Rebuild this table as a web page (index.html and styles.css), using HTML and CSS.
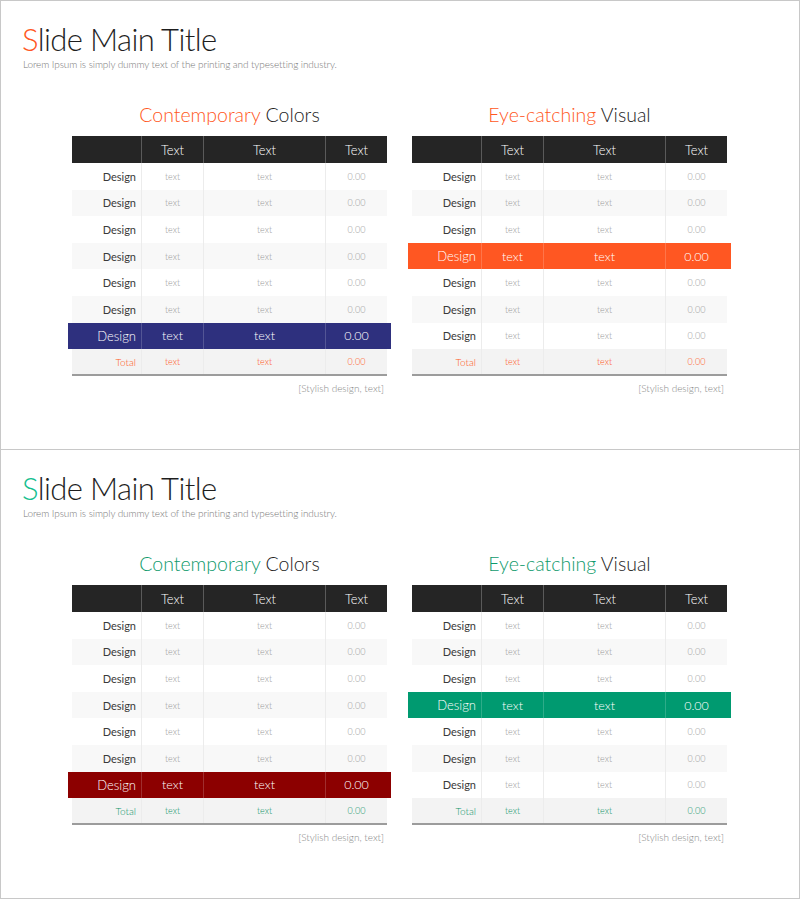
FILE: index.html
```html
<!DOCTYPE html>
<html>
<head>
<meta charset="utf-8">
<link rel="stylesheet" href="styles.css">
</head>
<body>
<div class="page">
  <section class="slide slide-a">
    <h1 class="title"><span class="accent">S</span>lide Main Title</h1>
    <p class="subtitle">Lorem Ipsum is simply dummy text of the printing and typesetting industry.</p>
    <div class="tables">
      <div class="block">
        <h2 class="heading"><span class="accent-h">Contemporary</span> Colors</h2>
        <div class="table">
          <div class="row head"><div></div><div>Text</div><div>Text</div><div>Text</div></div>
          <div class="row"><div>Design</div><div>text</div><div>text</div><div>0.00</div></div>
          <div class="row alt"><div>Design</div><div>text</div><div>text</div><div>0.00</div></div>
          <div class="row"><div>Design</div><div>text</div><div>text</div><div>0.00</div></div>
          <div class="row alt"><div>Design</div><div>text</div><div>text</div><div>0.00</div></div>
          <div class="row"><div>Design</div><div>text</div><div>text</div><div>0.00</div></div>
          <div class="row alt"><div>Design</div><div>text</div><div>text</div><div>0.00</div></div>
          <div class="row hl hl-blue"><div>Design</div><div>text</div><div>text</div><div>0.00</div></div>
          <div class="row total"><div>Total</div><div>text</div><div>text</div><div>0.00</div></div>
        </div>
        <p class="caption">[Stylish design, text]</p>
      </div>
      <div class="block">
        <h2 class="heading"><span class="accent-h">Eye-catching</span> Visual</h2>
        <div class="table">
          <div class="row head"><div></div><div>Text</div><div>Text</div><div>Text</div></div>
          <div class="row"><div>Design</div><div>text</div><div>text</div><div>0.00</div></div>
          <div class="row alt"><div>Design</div><div>text</div><div>text</div><div>0.00</div></div>
          <div class="row"><div>Design</div><div>text</div><div>text</div><div>0.00</div></div>
          <div class="row hl hl-orange"><div>Design</div><div>text</div><div>text</div><div>0.00</div></div>
          <div class="row"><div>Design</div><div>text</div><div>text</div><div>0.00</div></div>
          <div class="row alt"><div>Design</div><div>text</div><div>text</div><div>0.00</div></div>
          <div class="row"><div>Design</div><div>text</div><div>text</div><div>0.00</div></div>
          <div class="row total"><div>Total</div><div>text</div><div>text</div><div>0.00</div></div>
        </div>
        <p class="caption">[Stylish design, text]</p>
      </div>
    </div>
  </section>
  <section class="slide slide-b">
    <h1 class="title"><span class="accent">S</span>lide Main Title</h1>
    <p class="subtitle">Lorem Ipsum is simply dummy text of the printing and typesetting industry.</p>
    <div class="tables">
      <div class="block">
        <h2 class="heading"><span class="accent-h">Contemporary</span> Colors</h2>
        <div class="table">
          <div class="row head"><div></div><div>Text</div><div>Text</div><div>Text</div></div>
          <div class="row"><div>Design</div><div>text</div><div>text</div><div>0.00</div></div>
          <div class="row alt"><div>Design</div><div>text</div><div>text</div><div>0.00</div></div>
          <div class="row"><div>Design</div><div>text</div><div>text</div><div>0.00</div></div>
          <div class="row alt"><div>Design</div><div>text</div><div>text</div><div>0.00</div></div>
          <div class="row"><div>Design</div><div>text</div><div>text</div><div>0.00</div></div>
          <div class="row alt"><div>Design</div><div>text</div><div>text</div><div>0.00</div></div>
          <div class="row hl hl-red"><div>Design</div><div>text</div><div>text</div><div>0.00</div></div>
          <div class="row total"><div>Total</div><div>text</div><div>text</div><div>0.00</div></div>
        </div>
        <p class="caption">[Stylish design, text]</p>
      </div>
      <div class="block">
        <h2 class="heading"><span class="accent-h">Eye-catching</span> Visual</h2>
        <div class="table">
          <div class="row head"><div></div><div>Text</div><div>Text</div><div>Text</div></div>
          <div class="row"><div>Design</div><div>text</div><div>text</div><div>0.00</div></div>
          <div class="row alt"><div>Design</div><div>text</div><div>text</div><div>0.00</div></div>
          <div class="row"><div>Design</div><div>text</div><div>text</div><div>0.00</div></div>
          <div class="row hl hl-green"><div>Design</div><div>text</div><div>text</div><div>0.00</div></div>
          <div class="row"><div>Design</div><div>text</div><div>text</div><div>0.00</div></div>
          <div class="row alt"><div>Design</div><div>text</div><div>text</div><div>0.00</div></div>
          <div class="row"><div>Design</div><div>text</div><div>text</div><div>0.00</div></div>
          <div class="row total"><div>Total</div><div>text</div><div>text</div><div>0.00</div></div>
        </div>
        <p class="caption">[Stylish design, text]</p>
      </div>
    </div>
  </section>
</div>
</body>
</html>
```
FILE: styles.css
```css
* { box-sizing: border-box; }
html, body { margin: 0; padding: 0; background: #fff; }
body { font-family: "Lato", "Liberation Sans", sans-serif; font-weight: 300; color: #222; }
.page { width: 800px; }
.slide {
  width: 800px;
  height: 450px;
  border: 1px solid #c8c8c8;
  padding: 19px 0 0 0;
}
.slide-b { border-top: none; height: 449px; padding-top: 19px; }
.slide-a { --accent: #ff5722; --accent-h: #ff5722; --total: #ff5722; }
.slide-b { --accent: #15c08f; --accent-h: #0f9a6c; --total: #12946a; }

.title {
  margin: 0 0 0 21px;
  font-size: 31px;
  font-weight: 300;
  line-height: 38px;
  color: #1e1e1e;
  letter-spacing: -0.6px;
}
.accent { color: var(--accent); }
.subtitle {
  margin: 0 0 0 22px;
  font-size: 10px;
  line-height: 12px;
  color: #777;
  letter-spacing: -0.1px;
}
.tables {
  display: grid;
  grid-template-columns: 315px 315px;
  column-gap: 25px;
  padding: 0 71px;
  margin-top: 33px;
}
.heading {
  margin: 0 0 9px 0;
  text-align: center;
  font-size: 19.5px;
  font-weight: 300;
  line-height: 24px;
  color: #222;
}
.accent-h { color: var(--accent-h); }
.row {
  display: grid;
  grid-template-columns: 69px 62px 122px 62px;
  height: 26.6px;
  align-items: stretch;
  background: #fff;
  font-size: 9px;
  color: #9a9a9a;
}
.row > div {
  display: flex;
  align-items: center;
  justify-content: center;
  border-left: 1px solid #ececec;
}
.row > div:first-child {
  justify-content: flex-end;
  padding-right: 5px;
  border-left: none;
  font-size: 11px;
  font-weight: 400;
  color: #3a3a3a;
}
.row.alt { background: #f8f8f8; }
.row.head {
  height: 27px;
  background: #252525;
  color: #fff;
  font-size: 13px;
}
.row.head > div { border-left-color: #5a5a5a; }
.row.hl {
  margin: 0 -4px;
  grid-template-columns: 73px 62px 122px 66px;
  color: #fff;
  font-size: 12.5px;
  font-weight: 300;
}
.row.hl > div { border-left-color: rgba(255,255,255,0.18); }
.row.hl > div:first-child { color: #fff; font-size: 13px; font-weight: 300; padding-right: 5px; }
.row.hl > div:last-child { padding-right: 4px; }
.hl-blue { background: #2e307e; }
.hl-orange { background: #ff5722; }
.hl-red { background: #8c0000; }
.hl-green { background: #009a70; }
.row.total {
  background: #f3f3f3;
  border-bottom: 2px solid #9c9c9c;
  height: 27px;
  color: var(--total);
}
.row.total > div:first-child { color: var(--total); font-weight: 300; font-size: 10px; }
.caption {
  margin: 6px 3px 0 0;
  text-align: right;
  font-size: 10px;
  color: #888;
}
```
